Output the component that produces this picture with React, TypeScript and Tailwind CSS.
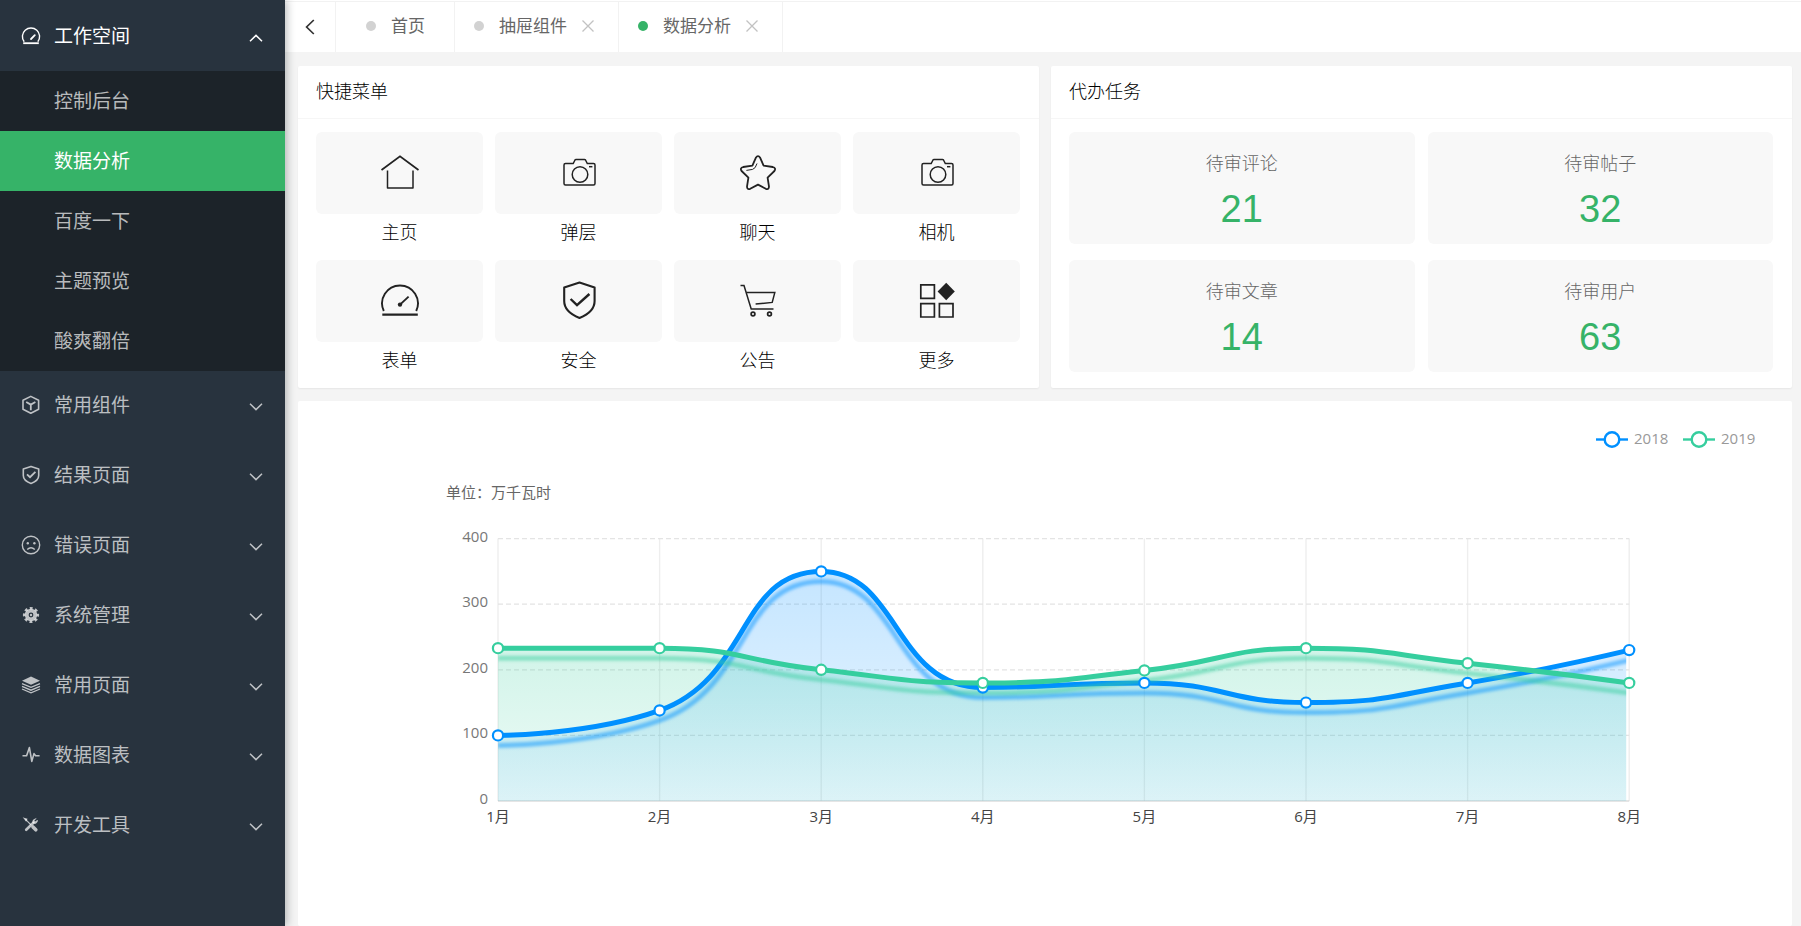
import { JSX } from "react";
import clsx from "clsx";

interface MenuGroup {
  title: string;
  icon: JSX.Element;
  children?: string[];
}

interface QuickItem {
  title: string;
  icon: JSX.Element;
}

const SmallIcon = ({ children }: { children: React.ReactNode }) => (
  <svg
    className="size-5 shrink-0"
    viewBox="0 0 20 20"
    fill="none"
    stroke="currentColor"
    strokeWidth="1.4"
    aria-hidden="true"
  >
    {children}
  </svg>
);

const BigIcon = ({ children }: { children: React.ReactNode }) => (
  <svg
    className="size-10"
    viewBox="0 0 40 40"
    fill="none"
    stroke="currentColor"
    strokeWidth="1.5"
    aria-hidden="true"
  >
    {children}
  </svg>
);

const Camera = () => (
  <BigIcon>
    <path d="M6.5 10.5H14.2L16 7Q16.3 6.5 17 6.5H25.5Q26.2 6.5 26.5 7L28.3 10.5H34.5Q36 10.5 36 12V30.5Q36 32 34.5 32H6.5Q5 32 5 30.5V12Q5 10.5 6.5 10.5Z" />
    <circle cx="21" cy="21.5" r="7.8" />
    <path d="M30 13.7H33.4" />
  </BigIcon>
);

const menu: MenuGroup[] = [
  {
    title: "工作空间",
    icon: (
      <SmallIcon>
        <path d="M3.2 14.8A8.6 8.6 0 1 1 16.8 14.8" />
        <path d="M2.2 16.2H17.8" strokeWidth="1.8" />
        <path d="M10 12L13.8 8.2" strokeWidth="1.8" strokeLinecap="round" />
      </SmallIcon>
    ),
    children: ["控制后台", "数据分析", "百度一下", "主题预览", "酸爽翻倍"],
  },
  {
    title: "常用组件",
    icon: (
      <SmallIcon>
        <path d="M9.8 1.4L17.6 5.2V14.2L9.8 18.2L2 14.2V5.2Z" strokeWidth="1.6" strokeLinejoin="round" />
        <path d="M5.2 7L9.8 9.6L14.4 7M9.8 9.6V15.2" strokeWidth="1.8" />
      </SmallIcon>
    ),
  },
  {
    title: "结果页面",
    icon: (
      <SmallIcon>
        <path
          d="M10 1.4L17.7 4V10.5C17.7 14.2 14.6 16.8 10 18.4C5.4 16.8 2.3 14.2 2.3 10.5V4Z"
          strokeWidth="1.6"
          strokeLinejoin="round"
        />
        <path d="M6 9.3L9 12.2L14.4 6.8" strokeWidth="1.8" />
      </SmallIcon>
    ),
  },
  {
    title: "错误页面",
    icon: (
      <SmallIcon>
        <circle cx="10" cy="10" r="8.7" />
        <path d="M6.2 14.6Q10 11 13.8 14.6" />
        <circle cx="6.8" cy="8.2" r="1.2" fill="currentColor" stroke="none" />
        <circle cx="13.4" cy="8.2" r="1.2" fill="currentColor" stroke="none" />
      </SmallIcon>
    ),
  },
  {
    title: "系统管理",
    icon: (
      <SmallIcon>
        <circle cx="10" cy="10" r="6.9" strokeWidth="2.4" strokeDasharray="2.9 2.52" strokeDashoffset="1.45" />
        <circle cx="10" cy="10" r="4.3" strokeWidth="3.8" />
        <circle cx="10" cy="10" r="1.2" fill="currentColor" stroke="none" />
      </SmallIcon>
    ),
  },
  {
    title: "常用页面",
    icon: (
      <SmallIcon>
        <path d="M10 1.6L19 5.8L10 9.8L1 5.8Z" fill="currentColor" stroke="none" />
        <path d="M1 8.6L10 12.4L19 8.6M1 11.4L10 15.2L19 11.4M1 14L10 17.8L19 14" strokeWidth="1.3" />
      </SmallIcon>
    ),
  },
  {
    title: "数据图表",
    icon: (
      <SmallIcon>
        <path d="M1.5 10.8H5.6L8.4 2.6L10.8 16.4L13 8.6L14.6 10.8H18.6" strokeWidth="1.6" strokeLinejoin="round" />
      </SmallIcon>
    ),
  },
  {
    title: "开发工具",
    icon: (
      <SmallIcon>
        <path d="M4.8 4.6L10 9.8" strokeWidth="1.2" />
        <path d="M3.6 3.6L5.6 4.2L5 5.4Z" fill="currentColor" />
        <path d="M12 12L14.8 14.8" strokeWidth="3.6" strokeLinecap="round" />
        <path d="M5.2 14.8L12.4 7.8" strokeWidth="2.6" strokeLinecap="round" />
        <path
          d="M15.2 3.4L13.2 5.4L14.6 6.8L16.4 5Q17 7.4 14.8 8.4Q12.6 9 11.6 7.4Q11 4.4 15.2 3.4Z"
          fill="currentColor"
          strokeWidth="0.5"
        />
      </SmallIcon>
    ),
  },
];

const quickMenu: QuickItem[] = [
  {
    title: "主页",
    icon: (
      <BigIcon>
        <path d="M1.5 17L20 3.2L38.5 17" strokeWidth="1.7" />
        <path d="M7.5 17.5V35H33V17.5" strokeLinejoin="round" />
      </BigIcon>
    ),
  },
  { title: "弹层", icon: <Camera /> },
  {
    title: "聊天",
    icon: (
      <BigIcon>
        <path
          d="M17.8 4.8Q20 1.6 22.2 4.8L25.6 12.6L34.8 14Q38.4 15 36.4 18L29.6 24.6L31 33.6Q31 37 27.8 35.8L20 31.6L12.2 35.8Q9 37 9 33.6L10.4 24.6L3.6 18Q1.6 15 5.2 14L14.4 12.6Z"
          strokeWidth="1.8"
          strokeLinejoin="round"
        />
        <path d="M19 10.5Q17.6 15.6 14.6 16.4L8.4 17.4" strokeWidth="1" />
      </BigIcon>
    ),
  },
  { title: "相机", icon: <Camera /> },
  {
    title: "表单",
    icon: (
      <BigIcon>
        <path d="M3.8 30A17.9 17.9 0 1 1 36.2 30" strokeWidth="1.9" />
        <path d="M2.3 33.6H37.8" strokeWidth="2.1" />
        <path d="M20 23.6L28.6 15.6" strokeWidth="1.9" />
        <circle cx="20" cy="23.6" r="2.2" fill="currentColor" stroke="none" />
      </BigIcon>
    ),
  },
  {
    title: "安全",
    icon: (
      <BigIcon>
        <path
          d="M20.5 1.6L35.6 6.6V20C35.6 28 29.5 33.4 20.5 37C11.5 33.4 5.2 28 5.2 20V6.6Z"
          strokeWidth="2.1"
          strokeLinejoin="round"
        />
        <path d="M11.6 18L18 24.2L30.4 13" strokeWidth="2.4" />
      </BigIcon>
    ),
  },
  {
    title: "公告",
    icon: (
      <BigIcon>
        <path d="M2.5 4.6H6L13.2 28H35.5" />
        <path d="M8.2 11.6H36.8L34.2 21.4L17.6 23" />
        <circle cx="15" cy="33" r="1.9" strokeWidth="1.7" />
        <circle cx="31.5" cy="33" r="1.9" strokeWidth="1.7" />
      </BigIcon>
    ),
  },
  {
    title: "更多",
    icon: (
      <BigIcon>
        <path d="M3.8 3.8H17.4V17.4H3.8ZM3.8 22.6H17.4V36H3.8ZM22.4 22.6H36V36H22.4Z" strokeWidth="1.7" />
        <path d="M29.2 1.8L37.8 10.5L29.2 19.2L20.6 10.5Z" fill="currentColor" stroke="none" />
      </BigIcon>
    ),
  },
];

const tasks = [
  { title: "待审评论", count: 21 },
  { title: "待审帖子", count: 32 },
  { title: "待审文章", count: 14 },
  { title: "待审用户", count: 63 },
];

const tabs = [
  { title: "首页", closable: false, active: false },
  { title: "抽屉组件", closable: true, active: false },
  { title: "数据分析", closable: true, active: true },
];

const Chevron = ({ up }: { up?: boolean }) => (
  <svg
    className="h-2 w-3.5"
    viewBox="0 0 14 8"
    fill="none"
    stroke="currentColor"
    strokeWidth="1.5"
    aria-hidden="true"
  >
    <path d={up ? "M1 7.2L7 1.4L13 7.2" : "M1 0.8L7 6.6L13 0.8"} />
  </svg>
);

const Sidebar = () => (
  <nav className="relative z-10 w-[285px] shrink-0 bg-[#28333e] text-[19px] text-white/70 shadow-[2px_0_8px_rgba(29,35,41,0.3)]">
    {menu.map((group) => (
      <div key={group.title}>
        <button
          type="button"
          className={clsx(
            "flex w-full items-center gap-[13px] pr-[22px] pl-[21px]",
            group.children ? "h-[71px] pt-0.5 text-white" : "h-[70px] pb-0.5"
          )}
        >
          {group.icon}
          <span className="flex-1 text-left">{group.title}</span>
          <span className={group.children ? "pt-0.5" : "pt-1"}>
            <Chevron up={!!group.children} />
          </span>
        </button>
        {group.children && (
          <ul className="bg-[#1c2329]">
            {group.children.map((name) => (
              <li key={name}>
                <a
                  href="#"
                  className={clsx(
                    "flex h-[60px] items-center pl-[54px]",
                    name === "数据分析" && "bg-[#36b368] text-white"
                  )}
                >
                  {name}
                </a>
              </li>
            ))}
          </ul>
        )}
      </div>
    ))}
  </nav>
);

const TabBar = () => (
  <div className="bg-white pt-px">
    <div className="flex h-[51px] border-t border-[#f2f2f2] text-[17px] text-[#666]">
      <button
        type="button"
        aria-label="向左"
        className="flex w-[51px] items-center justify-center border-r border-[#f2f2f2] text-[#333]"
      >
        <svg className="h-4 w-2.5" viewBox="0 0 10 16" fill="none" stroke="currentColor" strokeWidth="1.7">
          <path d="M8.8 1L1.6 8L8.8 15" />
        </svg>
      </button>
      {tabs.map((tab) => (
        <div
          key={tab.title}
          className={clsx(
            "flex items-center gap-[15px] border-r border-[#f2f2f2] pb-0.5",
            tab.closable ? "pr-6 pl-[19px]" : "pr-[29px] pl-[30px]"
          )}
        >
          <button type="button" className="flex items-center gap-[15px]">
            <span className={clsx("size-2.5 rounded-full", tab.active ? "bg-[#36b368]" : "bg-[#d2d2d2]")} />
            {tab.title}
          </button>
          {tab.closable && (
            <button type="button" aria-label="关闭" className="text-[#c2c2c2]">
              <svg className="size-3" viewBox="0 0 12 12" stroke="currentColor" strokeWidth="1.3">
                <path d="M0.5 0.5L11.5 11.5M11.5 0.5L0.5 11.5" />
              </svg>
            </button>
          )}
        </div>
      ))}
    </div>
  </div>
);

const Card = ({ title, children }: { title: string; children: React.ReactNode }) => (
  <section className="rounded-xs bg-white shadow-[0_1px_2px_rgba(0,0,0,0.06)]">
    <h2 className="flex h-[53px] items-center border-b border-[#f6f6f6] px-[18px] pb-0.5 text-[18px] font-light text-black">
      {title}
    </h2>
    {children}
  </section>
);

// ---- chart ----

type Point = [number, number];

const months = ["1月", "2月", "3月", "4月", "5月", "6月", "7月", "8月"];
const ticks = [0, 100, 200, 300, 400];

const LEFT = 200;
const STEP = 161.6;
const BASE = 400;
const RIGHT = LEFT + STEP * 7;

const getX = (i: number) => LEFT + i * STEP;
const getY = (v: number) => BASE - v * 0.656;

const clamp = (v: number, a: number, b: number) =>
  Math.min(Math.max(v, Math.min(a, b)), Math.max(a, b));

// smooth curve whose control points never leave the box of their segment
const smoothPath = (pts: Point[], smooth = 0.5) => {
  let d = `M${pts[0][0]} ${pts[0][1]}`;
  let cp0: Point = pts[0];
  for (let i = 1; i < pts.length; i++) {
    const prev = pts[i - 1];
    const cur = pts[i];
    const next = pts[i + 1];
    let cp1: Point = cur;
    let nextCp: Point = cur;
    if (next) {
      const lenPrev = Math.hypot(cur[0] - prev[0], cur[1] - prev[1]);
      const lenNext = Math.hypot(next[0] - cur[0], next[1] - cur[1]);
      const ratio = lenNext / (lenNext + lenPrev);
      const axis = (k: 0 | 1) => {
        let n = clamp(cur[k] + (next[k] - prev[k]) * smooth * ratio, next[k], cur[k]);
        const c = clamp(cur[k] - ((n - cur[k]) * lenPrev) / lenNext, prev[k], cur[k]);
        n = cur[k] + ((cur[k] - c) * lenNext) / lenPrev;
        return [c, n];
      };
      const [cx, nx] = axis(0);
      const [cy, ny] = axis(1);
      cp1 = [cx, cy];
      nextCp = [nx, ny];
    }
    d += `C${cp0[0]} ${cp0[1]} ${cp1[0]} ${cp1[1]} ${cur[0]} ${cur[1]}`;
    cp0 = nextCp;
  }
  return d;
};

const series = [
  { name: "2018", color: "#0090ff", data: [100, 138, 350, 173, 180, 150, 180, 230] },
  { name: "2019", color: "#36ce9e", data: [233, 233, 200, 180, 199, 233, 210, 180] },
].map((s) => {
  const pts = s.data.map((v, i): Point => [getX(i), getY(v)]);
  return { ...s, pts, line: smoothPath(pts) };
});

const LineChart = () => (
  <svg className="block w-full" viewBox="0 0 1494 500" role="img" aria-label="用电量">
    <defs>
      {series.map((s) => (
        <g key={s.name}>
          <linearGradient id={`area-${s.name}`} x1="0" y1="0" x2="0" y2="1">
            <stop offset="0" stopColor={s.color} stopOpacity="0.23" />
            <stop offset="1" stopColor={s.color} stopOpacity="0.08" />
          </linearGradient>
          <filter id={`shadow-${s.name}`} filterUnits="userSpaceOnUse" x="180" y="120" width="1180" height="300">
            <feDropShadow dx="0" dy="10" stdDeviation="1.6" floodColor={s.color} floodOpacity="0.5" />
          </filter>
        </g>
      ))}
      <clipPath id="plot">
        <rect x={LEFT} y="120" width={RIGHT - LEFT - 3} height={BASE - 120} />
      </clipPath>
    </defs>

    {months.map((m, i) => (
      <g key={m}>
        <path d={`M${getX(i)} ${getY(400)}V${BASE}`} stroke="#eeeeee" strokeWidth="1.4" />
        <text x={getX(i)} y="421" textAnchor="middle" fontSize="15" fill="#444">
          {m}
        </text>
      </g>
    ))}
    {ticks.map((t) => (
      <g key={t}>
        <path
          d={`M${LEFT} ${getY(t)}H${RIGHT}`}
          stroke={t === 0 ? "#cccccc" : "#e4e4e4"}
          strokeWidth="1.2"
          strokeDasharray={t === 0 ? undefined : "5 3"}
        />
        <text x="190" y={getY(t) + 3} textAnchor="end" fontSize="15" fill="#777">
          {t}
        </text>
      </g>
    ))}
    <text x="148" y="97" fontSize="15" fill="#666">
      单位：万千瓦时
    </text>

    <g clipPath="url(#plot)">
      {series.map((s) => (
        <path key={s.name} d={`${s.line}V${BASE}H${LEFT}Z`} fill={`url(#area-${s.name})`} />
      ))}
      {series.map((s) => (
        <path
          key={s.name}
          d={s.line}
          fill="none"
          stroke={s.color}
          strokeWidth="5"
          filter={`url(#shadow-${s.name})`}
        />
      ))}
    </g>
    {series.map((s) =>
      s.pts.map(([x, y]) => (
        <circle key={`${s.name}-${x}`} cx={x} cy={y} r="5.1" fill="#fff" stroke={s.color} strokeWidth="2.2" />
      ))
    )}

    {series.map((s, i) => (
      <g key={s.name} transform={`translate(${1298 + i * 87} 38.5)`}>
        <path d="M0 0H32" stroke={s.color} strokeWidth="2.4" />
        <circle cx="16" cy="0" r="7.3" fill="#fff" stroke={s.color} strokeWidth="2.4" />
        <text x="38" y="4" fontSize="15" fill="#999">
          {s.name}
        </text>
      </g>
    ))}
  </svg>
);

const App = () => {
  return (
    <div className="flex min-h-screen bg-[#f4f4f4] font-['Open_Sans','Noto_Sans_CJK_SC',sans-serif]">
      <Sidebar />
      <div className="flex min-w-0 flex-1 flex-col">
        <TabBar />
        <main className="flex flex-1 flex-col gap-[13px] pt-3.5 pr-[9px] pl-[13px]">
          <div className="grid grid-cols-2 gap-3">
            <Card title="快捷菜单">
              <div className="grid grid-cols-4 gap-x-3 gap-y-2.5 pt-[13px] pr-[19px] pb-2.5 pl-[18px]">
                {quickMenu.map((item) => (
                  <a key={item.title} href="#" className="text-center text-[18px] font-light text-black">
                    <span className="flex h-[82px] items-center justify-center rounded-md bg-[#f8f8f8] text-[#222]">
                      {item.icon}
                    </span>
                    <span className="block leading-9">{item.title}</span>
                  </a>
                ))}
              </div>
            </Card>
            <Card title="代办任务">
              <div className="grid grid-cols-2 gap-x-[13px] gap-y-4 pt-[13px] pr-[19px] pl-[18px]">
                {tasks.map((task) => (
                  <a
                    key={task.title}
                    href="#"
                    className="flex h-28 flex-col items-center justify-center rounded-md bg-[#f8f8f8]"
                  >
                    <span className="text-[18px] leading-[42px] font-light text-[#666]">{task.title}</span>
                    <span className="font-['Liberation_Sans',sans-serif] text-[38px] leading-[50px] text-[#36b368]">
                      {task.count}
                    </span>
                  </a>
                ))}
              </div>
            </Card>
          </div>
          <section className="flex-1 rounded-xs bg-white">
            <LineChart />
          </section>
        </main>
      </div>
    </div>
  );
};

export default App;
